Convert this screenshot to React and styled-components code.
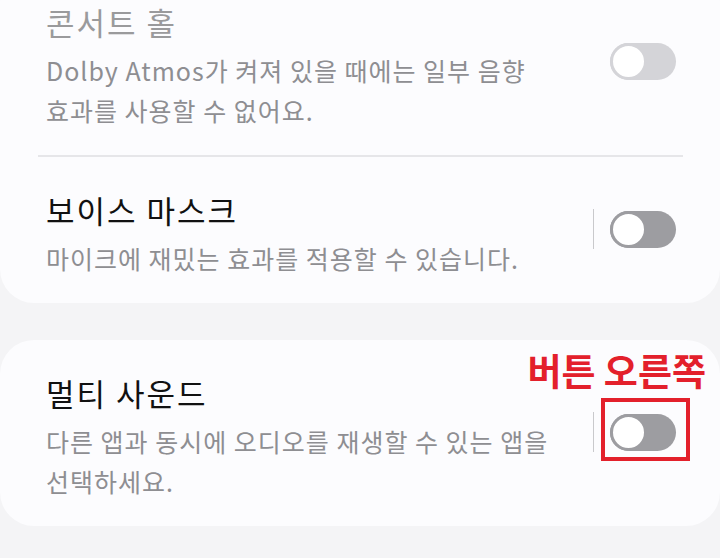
import React from 'react'
import styled, { createGlobalStyle } from 'styled-components'

const GlobalStyle = createGlobalStyle`
    html, body {
        margin: 0;
        padding: 0;
        background: #f4f4f6;
        font-family: "Noto Sans CJK KR", "Noto Sans", sans-serif;
    }
`

const Page = styled.div`
    height: 558px;
    overflow: hidden;
`

const List = styled.div`
    display: flex;
    flex-direction: column;
    gap: 37px;
    margin-top: -31px;
`

const Card = styled.div`
    background: #fcfcfe;
    border-radius: 34px;
`

const Row = styled.div`
    display: flex;
    align-items: center;
    padding: 33px 44px 25px 46px;
`

const TextCol = styled.div`
    flex: 1;
    min-width: 0;
    padding-right: 24px;
    word-break: keep-all;
`

const Title = styled.div`
    font-size: 31px;
    line-height: 40px;
    letter-spacing: 2px;
    color: ${p => (p.$dim ? '#9a9a9c' : '#111')};
`

const Desc = styled.div`
    margin-top: 8px;
    font-size: 25px;
    line-height: 40px;
    letter-spacing: 1px;
    color: #8e8e92;
`

const Divider = styled.div`
    height: 2px;
    margin: 0 37px 0 38px;
    background: #e6e6e9;
`

const Controls = styled.div`
    display: flex;
    align-items: center;
    gap: 16px;
    margin-bottom: 10px;
`

const Separator = styled.div`
    width: 1px;
    height: 40px;
    background: #c9c9cc;
`

const SwitchWrap = styled.div`
    position: relative;
`

const Track = styled.div`
    width: 66px;
    height: 37px;
    border-radius: 19px;
    background: ${p => (p.$dim ? '#d4d4d8' : '#9d9da1')};
    display: flex;
    align-items: center;
`

const Knob = styled.div`
    width: 37px;
    height: 37px;
    box-sizing: border-box;
    border-radius: 50%;
    background: #fff;
    border: 3px solid ${p => (p.$dim ? '#d4d4d8' : '#9d9da1')};
`

const Highlight = styled.div`
    position: absolute;
    top: -16px;
    left: -9px;
    right: -14px;
    bottom: -10px;
    border: 4px solid #e3202b;
`

const Note = styled.div`
    position: absolute;
    top: -64px;
    right: -30px;
    font-size: 37px;
    line-height: 40px;
    font-weight: 700;
    color: #e3202b;
    white-space: nowrap;
`

function Switch({ dim, marked }) {
    return (
        <SwitchWrap>
            <Track $dim={dim}>
                <Knob $dim={dim} />
            </Track>
            {marked && <Highlight />}
            {marked && <Note>버튼 오른쪽</Note>}
        </SwitchWrap>
    )
}

function SettingRow({ title, desc, dim, separator, marked }) {
    return (
        <Row>
            <TextCol>
                <Title $dim={dim}>{title}</Title>
                <Desc>{desc}</Desc>
            </TextCol>
            <Controls>
                {separator && <Separator />}
                <Switch dim={dim} marked={marked} />
            </Controls>
        </Row>
    )
}

export default function App() {
    return (
        <Page>
            <GlobalStyle />
            <List>
                <Card>
                    <SettingRow
                        dim
                        title="콘서트 홀"
                        desc="Dolby Atmos가 켜져 있을 때에는 일부 음향 효과를 사용할 수 없어요."
                    />
                    <Divider />
                    <SettingRow
                        separator
                        title="보이스 마스크"
                        desc="마이크에 재밌는 효과를 적용할 수 있습니다."
                    />
                </Card>
                <Card>
                    <SettingRow
                        separator
                        marked
                        title="멀티 사운드"
                        desc="다른 앱과 동시에 오디오를 재생할 수 있는 앱을 선택하세요."
                    />
                </Card>
            </List>
        </Page>
    )
}
